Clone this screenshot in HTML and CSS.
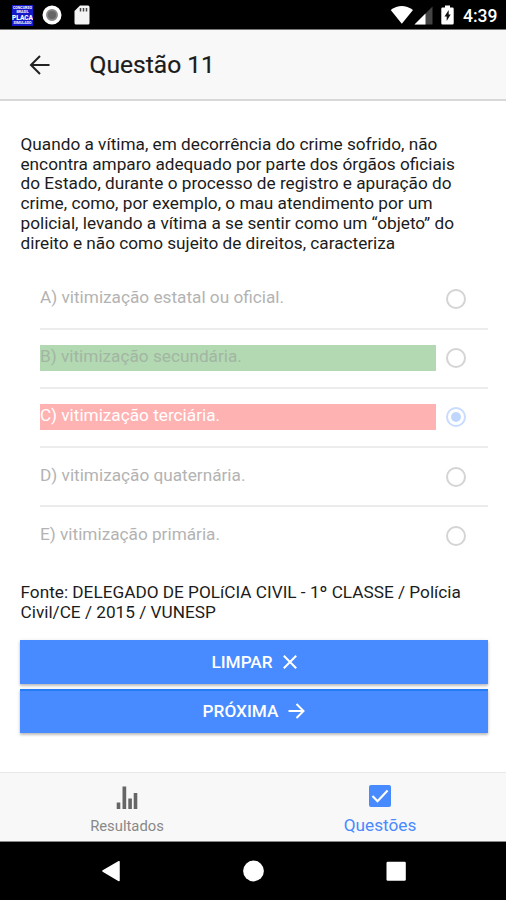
FILE: index.html
```html
<!DOCTYPE html>
<html lang="pt-BR">
<head>
<meta charset="utf-8">
<title>Questão 11</title>
<link rel="stylesheet" href="styles.css">
</head>
<body>
<div class="statusbar">
  <div class="app-badge"><span>CONCURSO</span><span>BRASIL</span><span class="big">PLACA</span><span>SIMULADO</span></div>
  <svg class="st-ring" width="20" height="20" viewBox="0 0 20 20"><circle cx="10" cy="10" r="7.700" fill="#888" stroke="#fff" stroke-width="3.600"/><circle cx="10" cy="10" r="4.800" fill="#666" stroke="#888" stroke-width="1.400"/></svg>
  <svg class="st-sd" width="16" height="20" viewBox="0 0 16 20"><path fill="#f4f4f4" d="M6 .5h8q1.500 0 1.500 1.500v16q0 1.500-1.500 1.500H2Q.5 19.500.5 18V6z"/><path stroke="#444" stroke-width="1.500" d="M6.500 3v3.500M9.500 3v3.500M12.500 3v3.500"/></svg>
  <div class="st-right">
    <svg width="24" height="20" viewBox="0 0 24 20"><path fill="#fff" d="M.7 5Q11.700-3 23 5L11.800 18.800z"/></svg>
    <svg class="st-signal" width="19" height="19" viewBox="0 0 19 19"><path fill="#444" d="M18.500.5v18H.5z"/><path fill="#fff" d="M11.500 7.500v11H.5z"/></svg>
    <svg class="st-batt" width="13" height="20" viewBox="0 0 13 20"><path fill="#fff" d="M4 .5h5v2h2.500q1.200 0 1.200 1.200v14.600q0 1.200-1.200 1.200h-10Q.3 19.500.3 18.300V3.700Q.3 2.500 1.500 2.500H4z"/><path fill="#111" d="M7.700 5 3.500 11.600h2.200V16L9.700 9.600H7.700z"/></svg>
    <span class="clock">4:39</span>
  </div>
</div>
<header class="header">
  <svg class="back" width="22" height="20" viewBox="0 0 22 20"><path fill="none" stroke="#222" stroke-width="2" d="M20.500 10H2.500M11 1 2 10l9 9"/></svg>
  <h1>Questão 11</h1>
</header>
<main class="content">
  <p class="question">Quando a vítima, em decorrência do crime sofrido, não<br>encontra amparo adequado por parte dos órgãos oficiais<br>do Estado, durante o processo de registro e apuração do<br>crime, como, por exemplo, o mau atendimento por um<br>policial, levando a vítima a se sentir como um “objeto” do<br>direito e não como sujeito de direitos, caracteriza</p>
  <div class="options">
    <div class="option"><div class="label">A) vitimização estatal ou oficial.</div><i class="radio"></i></div>
    <div class="option"><div class="label right">B) vitimização secundária.</div><i class="radio"></i></div>
    <div class="option"><div class="label wrong">C) vitimização terciária.</div><i class="radio checked"></i></div>
    <div class="option"><div class="label">D) vitimização quaternária.</div><i class="radio"></i></div>
    <div class="option"><div class="label">E) vitimização primária.</div><i class="radio"></i></div>
  </div>
  <p class="source">Fonte: DELEGADO DE POLíCIA CIVIL - 1º CLASSE / Polícia<br>Civil/CE / 2015 / VUNESP</p>
  <div class="buttons">
    <button class="btn">LIMPAR <svg class="x" width="14" height="14" viewBox="0 0 14 14"><path fill="none" stroke="#fff" stroke-width="2" d="m.8.8 12.400 12.400M13.200.8.8 13.200"/></svg></button>
    <button class="btn">PRÓXIMA <svg class="arrow" width="17" height="16" viewBox="0 0 17 16"><path fill="none" stroke="#fff" stroke-width="2" d="M.5 8h14.500M8.500 1l7 7-7 7"/></svg></button>
  </div>
</main>
<nav class="tabs">
  <div class="tab">
    <svg width="22" height="24" viewBox="0 0 22 24"><path fill="#666" d="M.7 17.500h3.600V24H.7zM6.500 1.500h3.700V24H6.500zM12.300 13.500h3.600V24h-3.600zM17.700 8h3.600v16h-3.600z"/></svg>
    <span>Resultados</span>
  </div>
  <div class="tab active">
    <svg width="22" height="22" viewBox="0 0 22 22"><rect width="22" height="22" rx="2" fill="#488aff"/><path fill="none" stroke="#fff" stroke-width="2.200" d="m3.500 11 5 5.200L18.600 5.500"/></svg>
    <span>Questões</span>
  </div>
</nav>
<div class="navbar">
  <svg width="506" height="58" viewBox="0 0 506 58"><path fill="#fff" stroke="#fff" stroke-width="1.500" stroke-linejoin="round" d="M119 19.700v18.800L103 29z"/><circle cx="253.500" cy="29" r="10.400" fill="#fff"/><rect x="386.500" y="19.700" width="19.300" height="19" rx="1.300" fill="#fff"/></svg>
</div>
</body>
</html>
```
FILE: styles.css
```css
* { box-sizing: border-box; }
body {
  margin: 0;
  width: 506px;
  height: 900px;
  overflow: hidden;
  display: flex;
  flex-direction: column;
  background: #fff;
  color: #1c1c1c;
  font-family: Roboto, "Noto Sans", sans-serif;
  font-size: 17.220px;
}
p, h1 { margin: 0; font-weight: 400; }
svg { display: block; flex: none; }
.statusbar {
  flex: 0 0 30px;
  background: #000;
  border-bottom: 1px solid #777;
  display: flex;
  align-items: flex-start;
  padding: 5px 8px 0 12px;
}
.app-badge {
  width: 21px;
  height: 21px;
  background: #1418c8;
  color: #fff;
  display: flex;
  flex-direction: column;
  align-items: center;
  justify-content: center;
  overflow: hidden;
  font-size: 3.600px;
  line-height: 4.500px;
  font-weight: 700;
}
.app-badge .big { font-size: 6.500px; line-height: 6.500px; font-weight: 900; }
.st-ring { margin-left: 9px; }
.st-sd { margin-left: 12px; }
.st-right { margin-left: auto; display: flex; align-items: flex-start; }
.st-signal { margin: 1px 0 0 0; }
.st-batt { margin: 0 9px 0 8px; }
.clock { color: #fff; font-size: 17.500px; line-height: 22px; font-weight: 500; width: 35px; white-space: nowrap; }
.header {
  flex: 0 0 71px;
  background: #f8f8f8;
  border-bottom: 2px solid #d8d8d8;
  display: flex;
  align-items: center;
  padding-left: 29px;
}
.header h1 { margin-left: 38.500px; font-size: 24.600px; line-height: 30px; -webkit-text-stroke: .2px #1c1c1c; }
.content { flex: 1; padding: 34px 18px 0 20px; }
.question, .source { padding-left: .5px; line-height: 19.700px; white-space: nowrap; }
.options { margin: 17.500px 0 17px 20px; }
.option {
  height: 59.100px;
  display: flex;
  align-items: center;
  border-bottom: 2px solid #ececec;
  color: #b3b3b3;
}
.option:last-child { border-bottom-color: transparent; }
.label { width: 396px; height: 26px; line-height: 23px; }
.right { background: #b2d9b2; color: #a3b5a3; }
.wrong { background: #ffb2b2; color: #fff; }
.radio {
  width: 20px;
  height: 20px;
  margin-left: 9.500px;
  border: 2.400px solid #d4d4d4;
  border-radius: 50%;
  display: grid;
  place-items: center;
}
.checked { border-color: #c8dcff; }
.checked::after { content: ""; width: 10px; height: 10px; border-radius: 50%; background: #bfd7ff; }
.buttons { display: flex; flex-direction: column; gap: 4.700px; padding-top: 17.500px; }
.btn {
  width: 468px;
  height: 44.300px;
  border: 0;
  padding: 0 0 1px;
  background: #488aff;
  color: #fff;
  font: 500 17.220px/20px Roboto, "Noto Sans", sans-serif;
  display: flex;
  align-items: center;
  justify-content: center;
  box-shadow: 0 2px 2px rgba(0,0,0,.18), 0 1px 4px rgba(0,0,0,.14);
}
.btn + .btn { border-top: 2px solid #247bf6; padding-bottom: 3px; }
.x { margin-left: 10px; }
.arrow { margin-left: 10px; }
.tabs {
  flex: 0 0 70px;
  background: #f8f8f8;
  border-top: 1px solid #e8e8e8;
  border-bottom: 1px solid #888;
  display: flex;
}
.tab { flex: 1; display: flex; flex-direction: column; align-items: center; padding: 12px 0 0 1px; color: #888; font-size: 14.800px; }
.tab span { margin-top: 8px; line-height: 18px; }
.active { padding-top: 12px; color: #488aff; font-size: 17.220px; }
.active span { margin-top: 9px; }
.navbar { flex: 0 0 58px; background: #000; }
```
